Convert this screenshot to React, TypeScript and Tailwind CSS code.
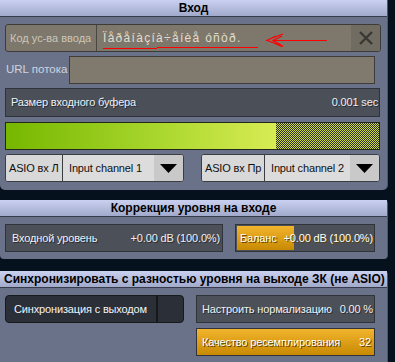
import React from "react";

function Header({ children, center = true }: { children: React.ReactNode; center?: boolean }) {
  return (
    <div
      className={`h-[17px] border-b border-[#353b4a] bg-[linear-gradient(#c9d0f0,#a2aacb)] flex items-center ${center ? "justify-center" : "pl-[4px]"} font-bold text-[12px] tracking-normal text-black leading-none`}
    >
      {children}
    </div>
  );
}

function Arrow() {
  return (
    <div className="w-[29px] h-full flex items-center justify-center">
      <svg width="17" height="9" viewBox="0 0 17 9">
        <path d="M0 0 H17 L8.5 9 Z" fill="#000" />
      </svg>
    </div>
  );
}

function AsioSel({ label, value, labelW }: { label: string; value: string; labelW: string }) {
  return (
    <div className="w-[179px] h-[28px] flex rounded-[3px] border border-[#3a3d42] bg-[#dedede] text-[#101010] overflow-hidden">
      <div className={`${labelW} shrink-0 h-full flex items-center pl-[3px] border-r border-[#3a3d42] bg-[#d8d8d8]`}>{label}</div>
      <div className="flex-1 h-full flex items-center pl-[6px] bg-[#dcdcdc]">{value}</div>
      <div className="h-full shrink-0 bg-[#c9c9c9]">
        <Arrow />
      </div>
    </div>
  );
}

export default function App() {
  return (
    <div className="relative w-[395px] h-[362px] bg-[#05111d] overflow-hidden font-['Liberation_Sans',Arial,sans-serif] text-[11px] tracking-[-0.15px] whitespace-nowrap">
      <div className="w-[388px] flex flex-col">
        {/* Panel 1 */}
        <div className="h-[190px] bg-[#6a7289] rounded-b-[5px] border-r border-[#4f566a]">
          <Header>Вход</Header>
          <div className="px-[5px] pt-[7px] flex flex-col">
            <div className="w-[376px] h-[28px] flex rounded-[3px] border border-[#3d3b37] bg-[#7e786c] overflow-hidden">
              <div className="w-[91px] shrink-0 h-full flex items-center pl-[4px] tracking-normal text-[#cbc5b8] border-r border-[#4a4740]">Код ус-ва ввода</div>
              <div className="flex-1 h-full flex items-center pl-[6px] text-[12px] tracking-[1.3px] text-[#e2dccd]">Ïåðåíàçíà÷åíèå óñòð.</div>
              <div className="w-[29px] shrink-0 h-full bg-[#716c62] flex items-center justify-center">
                <svg width="14" height="14" viewBox="0 0 14 14">
                  <path d="M1 1 L13 13 M13 1 L1 13" stroke="#3a3834" strokeWidth="2.4" />
                </svg>
              </div>
            </div>
            <div className="mt-[4px] h-[28px] flex items-center">
              <div className="w-[64px] shrink-0 pl-[1px] text-[11.5px] tracking-normal text-[#cfd3df]">URL потока</div>
              <div className="w-[306px] h-[28px] bg-[#807a6e] border border-[#3f3d38]" />
            </div>
            <div className="mt-[4px] w-[375px] h-[29px] flex items-center justify-between px-[5px] bg-[#4b5058] border border-[#30343a] text-[#eef0f4] [text-shadow:1px_1px_0_#2a2d33]">
              <span>Размер входного буфера</span>
              <span className="-mr-[4px]">0.001 sec</span>
            </div>
            <div className="mt-[5px] w-[375px] h-[28px] flex border border-[#24281c] bg-[repeating-conic-gradient(#c9d94e_0_25%,#2e3212_0_50%)] bg-[length:2px_2px]">
              <div className="w-[270px] h-full bg-[linear-gradient(90deg,#76b700,#a8d62c_55%,#d8ec54)]" />
            </div>
            <div className="mt-[4px] w-[375px] flex justify-between">
              <AsioSel label="ASIO вх Л" value="Input channel 1" labelW="w-[57px]" />
              <AsioSel label="ASIO вх Пр" value="Input channel 2" labelW="w-[63px]" />
            </div>
          </div>
        </div>

        {/* Panel 2 */}
        <div className="mt-[10px] h-[59px] bg-[#6a7289] rounded-[4px] border-r border-[#4f566a]">
          <Header>Коррекция уровня на входе</Header>
          <div className="px-[5px] pt-[7px] flex justify-between w-[380px]">
            <div className="w-[218px] h-[28px] flex items-center justify-between pl-[6px] pr-[2px] bg-[#4c5058] border border-[#30343a] text-[#eef0f4] [text-shadow:1px_1px_0_#2a2d33]">
              <span>Входной уровень</span>
              <span>+0.00 dB (100.0%)</span>
            </div>
            <div className="relative w-[140px] h-[28px] bg-[#4c5058] border border-[#30343a] text-white">
              <div className="absolute left-[1px] top-[1px] bottom-[1px] w-[57px] bg-[linear-gradient(#f2b42c,#c88a02)]" />
              <div className="relative h-full flex items-center justify-between pl-[4px] pr-[1px] [text-shadow:1px_1px_0_#5a4000]">
                <span>Баланс</span>
                <span>+0.00 dB (100.0%)</span>
              </div>
            </div>
          </div>
        </div>

        {/* Panel 3 */}
        <div className="mt-[12px] h-[100px] bg-[#6a7289] rounded-t-[4px] border-r border-[#4f566a]">
          <Header center={false}>Синхронизировать с разностью уровня на выходе ЗК (не ASIO)</Header>
          <div className="px-[5px] pt-[7px] flex justify-between w-[380px]">
            <div className="w-[179px] h-[28px] flex rounded-[4px] border border-[#17191d] bg-[#2b2f37] text-[#f2f4f8]">
              <div className="w-[152px] h-full flex items-center pl-[8px] border-r-2 border-[#16181c]">Синхронизация с выходом</div>
            </div>
            <div className="flex flex-col gap-[5px]">
              <div className="w-[179px] h-[28px] flex items-center justify-between pl-[5px] pr-[1px] bg-[#4c5058] border border-[#30343a] text-[#eef0f4] [text-shadow:1px_1px_0_#2a2d33]">
                <span>Настроить нормализацию</span>
                <span>0.00 %</span>
              </div>
              <div className="w-[179px] h-[28px] flex items-center justify-between pl-[5px] pr-[3px] bg-[linear-gradient(#f2b42c,#c88a02)] border border-[#30343a] text-white [text-shadow:1px_1px_0_#5a4000]">
                <span>Качество ресемплирования</span>
                <span>32</span>
              </div>
            </div>
          </div>
        </div>
      </div>

      {/* red annotation */}
      <svg className="absolute left-0 top-0 pointer-events-none" width="395" height="362" viewBox="0 0 395 362">
        <path d="M103 48.5 H157 M157 47.5 H258" stroke="#ff0000" strokeWidth="1" fill="none" />
        <path d="M274 40.5 H327" stroke="#ff0000" strokeWidth="1" fill="none" />
        <path d="M283 34 L272 38 L267 40.5 L274 43 L281 46 L283 46 M282 36 L273 40.5 L281 45 M271 38.5 L276 36" stroke="#ff0000" strokeWidth="1.3" fill="none" />
      </svg>
    </div>
  );
}
